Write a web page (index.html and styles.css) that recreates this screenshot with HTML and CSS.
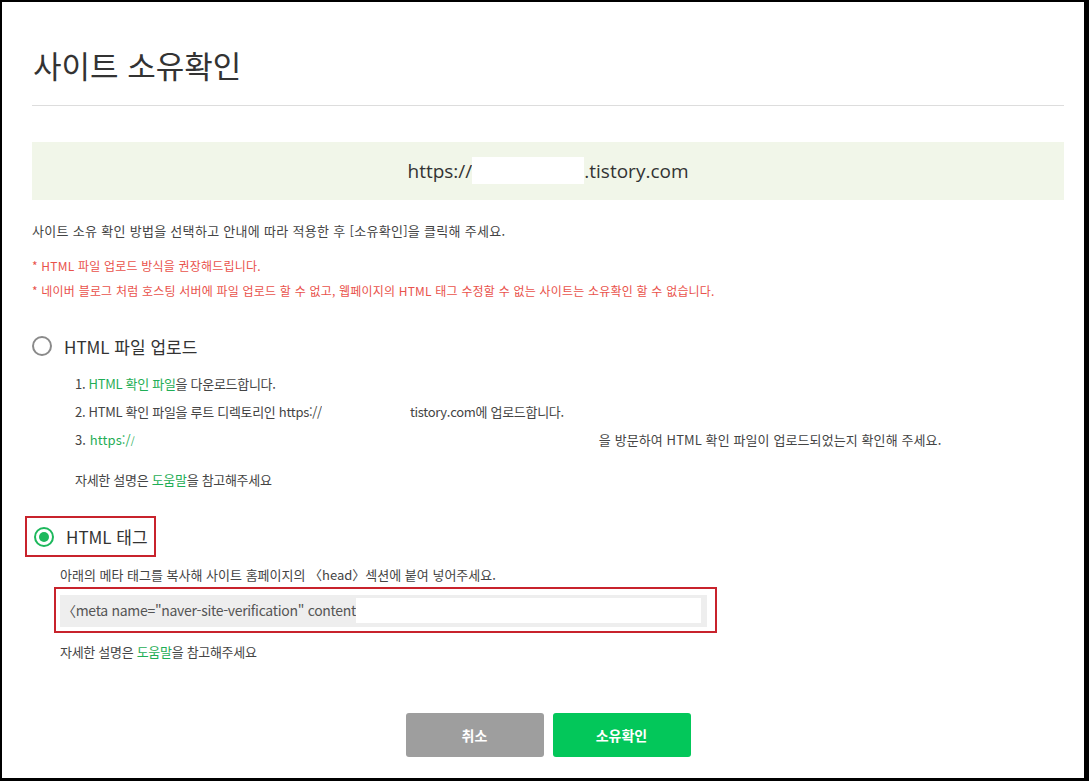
FILE: index.html
```html
<!DOCTYPE html>
<html lang="ko">

<head>
    <meta charset="UTF-8">
    <meta name="viewport" content="width=device-width, initial-scale=1.0">
    <title>사이트 소유확인</title>
    <link rel="stylesheet" href="styles.css">
</head>

<body>
    <div class="frame">
        <h2 class="title">사이트 소유확인</h2>

        <!-- 사이트 주소 -->
        <div class="site_url">https://<span class="blank url_blank"></span>.tistory.com</div>

        <p class="guide">사이트 소유 확인 방법을 선택하고 안내에 따라 적용한 후 [소유확인]을 클릭해 주세요.</p>
        <ul class="notice">
            <li>* HTML 파일 업로드 방식을 권장해드립니다.</li>
            <li>* 네이버 블로그 처럼 호스팅 서버에 파일 업로드 할 수 없고, 웹페이지의 HTML 태그 수정할 수 없는 사이트는 소유확인 할 수 없습니다.</li>
        </ul>

        <!-- HTML 파일 업로드 -->
        <div class="method method_file">
            <label class="radio_label">
                <span class="radio"></span>HTML 파일 업로드
            </label>
            <ol class="steps">
                <li>1. <a href="javascript:;" class="green">HTML 확인 파일</a>을 다운로드합니다.</li>
                <li>2. HTML 확인 파일을 루트 디렉토리인 https://<span class="blank step_blank"></span>tistory.com에 업로드합니다.</li>
                <li class="step_visit">3. <span class="green">https:/<span class="slash">/</span></span><span class="blank visit_blank"></span>을 방문하여 HTML 확인 파일이 업로드되었는지 확인해 주세요.</li>
            </ol>
            <p class="help">자세한 설명은 <a href="javascript:;" class="green">도움말</a>을 참고해주세요</p>
        </div>

        <!-- HTML 태그 -->
        <div class="method method_tag">
            <label class="radio_label checked_box">
                <span class="radio checked"></span>HTML 태그
            </label>
            <p class="tag_desc">아래의 메타 태그를 복사해 사이트 홈페이지의 〈head〉섹션에 붙여 넣어주세요.</p>
            <div class="tag_box">
                <div class="tag_input">〈meta name="naver-site-verification" content<span class="blank tag_blank"></span></div>
            </div>
            <p class="help">자세한 설명은 <a href="javascript:;" class="green">도움말</a>을 참고해주세요</p>
        </div>

        <div class="buttons">
            <a href="javascript:;" class="btn btn_cancel">취소</a>
            <a href="javascript:;" class="btn btn_ok">소유확인</a>
        </div>
    </div>
</body>

</html>
```

FILE: styles.css
```css
* {
    margin: 0px;
    padding: 0px;
    box-sizing: border-box;
}

ul,
ol {
    list-style: none;
}

a {
    text-decoration: none;
}

body {
    font-family: "Noto Sans CJK KR", "Noto Sans", sans-serif;
    color: #444;
    background-color: #000;
}

.frame {
    width: 1089px;
    height: 781px;
    border-style: solid;
    border-color: #000;
    border-width: 2px 5px 3px 2px;
    background-color: #fff;
    padding: 0px 20px 0px 30px;
}

.green {
    color: #1fae56;
}

.blank {
    display: inline-block;
    vertical-align: middle;
    background-color: #fff;
}


/* -------------------------제목------------------------- */
.title {
    font-size: 31px;
    font-weight: normal;
    color: #333;
    letter-spacing: 0px;
    line-height: 40px;
    padding: 43px 0px 20px 1px;
    border-bottom: 1px solid #ddd;
}

.site_url {
    margin-top: 36px;
    height: 58px;
    line-height: 58px;
    background-color: #f1f6e9;
    text-align: center;
    font-size: 19px;
    color: #333;
    font-family: "Open Sans", "Noto Sans CJK KR", sans-serif;
}

.url_blank {
    width: 112px;
    height: 27px;
    margin-top: -4px;
}


/* -------------------------안내------------------------- */
.guide {
    margin-top: 22px;
    font-size: 13px;
    line-height: 18px;
    letter-spacing: 0.3px;
}

.notice {
    margin-top: 17px;
    color: #e9524b;
    font-size: 12px;
    letter-spacing: 0.2px;
}

.notice li {
    line-height: 18px;
    margin-bottom: 7px;
}


/* -------------------------방법------------------------- */
.method_file {
    margin-top: 34px;
}

.radio_label {
    display: flex;
    align-items: center;
    font-size: 17px;
    color: #333;
    height: 24px;
    letter-spacing: 0px;
}

.radio {
    width: 20px;
    height: 20px;
    border: 2px solid #8a8a8a;
    border-radius: 50%;
    margin-right: 12px;
    position: relative;
}

.radio.checked {
    border-color: #1db85c;
}

.radio.checked::after {
    content: "";
    position: absolute;
    left: 3px;
    top: 3px;
    width: 10px;
    height: 10px;
    border-radius: 50%;
    background-color: #1db85c;
}

.steps {
    margin-top: 17px;
    padding-left: 43px;
    font-size: 13px;
    letter-spacing: -0.3px;
}

.steps li {
    line-height: 18px;
    margin-bottom: 10px;
}

.steps .step_visit {
    letter-spacing: 0.1px;
}

.slash {
    font-size: 10px;
}

.step_blank {
    width: 88px;
    height: 16px;
}

.visit_blank {
    width: 464px;
    height: 16px;
}

.method_file .help {
    padding-left: 43px;
    margin-top: 21px;
}

.help {
    font-size: 13px;
    line-height: 18px;
    letter-spacing: -0.3px;
}

.method_tag {
    margin-top: 27px;
}

.checked_box {
    width: 131px;
    height: 41px;
    margin-left: -7px;
    padding-left: 7px;
    border: 2px solid #c8232c;
}

.tag_desc {
    margin-top: 9px;
    padding-left: 28px;
    font-size: 13px;
    line-height: 18px;
    letter-spacing: 0px;
}

.tag_box {
    margin: 3px 0px 0px 22px;
    width: 663px;
    height: 46px;
    border: 2px solid #c8232c;
    padding: 6px 8px 4px 4px;
}

.tag_input {
    height: 32px;
    background-color: #eee;
    padding: 3px 6px 0px 2px;
    font-size: 14px;
    line-height: 25px;
    color: #555;
    letter-spacing: -0.3px;
    display: flex;
}

.tag_blank {
    flex: 1;
    height: 25px;
}

.method_tag .help {
    padding-left: 28px;
    margin-top: 10px;
}


/* -------------------------버튼------------------------- */
.buttons {
    display: flex;
    justify-content: center;
    gap: 9px;
    margin-top: 52px;
    padding-right: 0px;
}

.btn {
    width: 138px;
    height: 44px;
    line-height: 44px;
    border-radius: 3px;
    text-align: center;
    color: #fff;
    font-size: 14px;
    font-weight: bold;
}

.btn_cancel {
    background-color: #9e9e9e;
}

.btn_ok {
    background-color: #03c75a;
}
```
